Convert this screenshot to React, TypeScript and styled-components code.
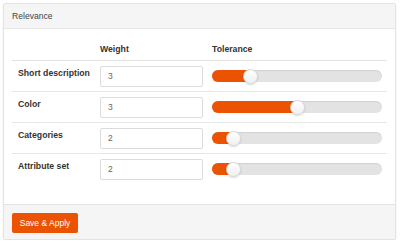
import React from 'react';
import styled, { createGlobalStyle } from 'styled-components';

const GlobalStyle = createGlobalStyle`
  html, body {
    margin: 0;
    padding: 0;
    background: #fff;
  }
  body {
    font-family: "Liberation Sans", Arial, sans-serif;
    color: #333;
  }
`;

const Panel = styled.div`
  margin: 3px 0 0 3px;
  width: 393px;
  box-sizing: border-box;
  border: 1px solid #e3e3e3;
  border-radius: 2px;
  box-shadow: 0 1px 2px rgba(0, 0, 0, 0.08);
  background: #fff;
`;

const PanelHeader = styled.div`
  height: 25px;
  box-sizing: border-box;
  padding: 0 8px;
  display: flex;
  align-items: center;
  background: #f5f5f5;
  border-bottom: 1px solid #e6e6e6;
  font-size: 8.6px;
  color: #444;
`;

const PanelBody = styled.div`
  padding: 0 8px 20px;
`;

const Grid = styled.div`
  display: grid;
  grid-template-columns: 88px 112px 1fr;
`;

const HeadRow = styled.div`
  display: contents;
`;

const HeadCell = styled.div`
  height: 32px;
  box-sizing: border-box;
  padding-top: 15px;
  border-bottom: 1px solid #e3e3e3;
  font-size: 8.7px;
  font-weight: bold;
  color: #333;
`;

const Cell = styled.div<{ $last?: boolean }>`
  height: ${p => (p.$last ? '30px' : '31px')};
  box-sizing: border-box;
  border-bottom: ${p => (p.$last ? 'none' : '1px solid #e6e6e6')};
  display: flex;
  align-items: center;
`;

const LabelCell = styled(Cell)`
  align-items: flex-start;
  padding: 7px 0 0 6px;
  font-size: 8.7px;
  font-weight: bold;
  color: #333;
`;

const WeightInput = styled.input`
  width: 103px;
  height: 21px;
  box-sizing: border-box;
  margin: 0;
  padding: 0 7px;
  border: 1px solid #dcdcdc;
  border-radius: 2px;
  font-family: "Liberation Sans", Arial, sans-serif;
  font-size: 8.5px;
  color: #666;
  background: #fff;
  outline: none;
`;

const Track = styled.div`
  position: relative;
  width: 170px;
  height: 12px;
  border-radius: 6px;
  background: #e3e3e3;
  box-shadow: inset 0 1px 1px rgba(0, 0, 0, 0.08);
`;

const Fill = styled.div`
  height: 100%;
  border-radius: 6px 0 0 6px;
  background: #eb5202;
`;

const Thumb = styled.div`
  position: absolute;
  top: 50%;
  width: 15px;
  height: 15px;
  margin: -7.5px 0 0 -7.5px;
  box-sizing: border-box;
  border-radius: 50%;
  border: 1px solid #d6d6d6;
  background: linear-gradient(#ffffff, #f0f0f0);
  box-shadow: 0 1px 2px rgba(0, 0, 0, 0.15);
`;

const PanelFooter = styled.div`
  padding: 7px 8px 6px;
  background: #f5f5f5;
  border-top: 1px solid #e3e3e3;
`;

const ApplyButton = styled.button`
  width: 66px;
  height: 20px;
  padding: 0;
  border: none;
  border-radius: 2px;
  background: #eb5202;
  color: #fff;
  font-family: "Liberation Sans", Arial, sans-serif;
  font-size: 8.5px;
  cursor: pointer;
`;

interface Rule {
  label: string;
  weight: number;
  tolerance: number;
}

const rules: Rule[] = [
  { label: 'Short description', weight: 3, tolerance: 22.4 },
  { label: 'Color', weight: 3, tolerance: 50 },
  { label: 'Categories', weight: 2, tolerance: 12.4 },
  { label: 'Attribute set', weight: 2, tolerance: 12.4 },
];

const Slider: React.FC<{ value: number }> = ({ value }) => (
  <Track>
    <Fill style={{ width: `${value}%` }} />
    <Thumb style={{ left: `${value}%` }} />
  </Track>
);

export default function App() {
  return (
    <>
      <GlobalStyle />
      <Panel>
        <PanelHeader>Relevance</PanelHeader>
        <PanelBody>
          <Grid>
            <HeadRow>
              <HeadCell />
              <HeadCell>Weight</HeadCell>
              <HeadCell>Tolerance</HeadCell>
            </HeadRow>
            {rules.map((r, i) => {
              const last = i === rules.length - 1;
              return (
                <React.Fragment key={r.label}>
                  <LabelCell $last={last}>{r.label}</LabelCell>
                  <Cell $last={last}>
                    <WeightInput defaultValue={r.weight} />
                  </Cell>
                  <Cell $last={last}>
                    <Slider value={r.tolerance} />
                  </Cell>
                </React.Fragment>
              );
            })}
          </Grid>
        </PanelBody>
        <PanelFooter>
          <ApplyButton>Save &amp; Apply</ApplyButton>
        </PanelFooter>
      </Panel>
    </>
  );
}
